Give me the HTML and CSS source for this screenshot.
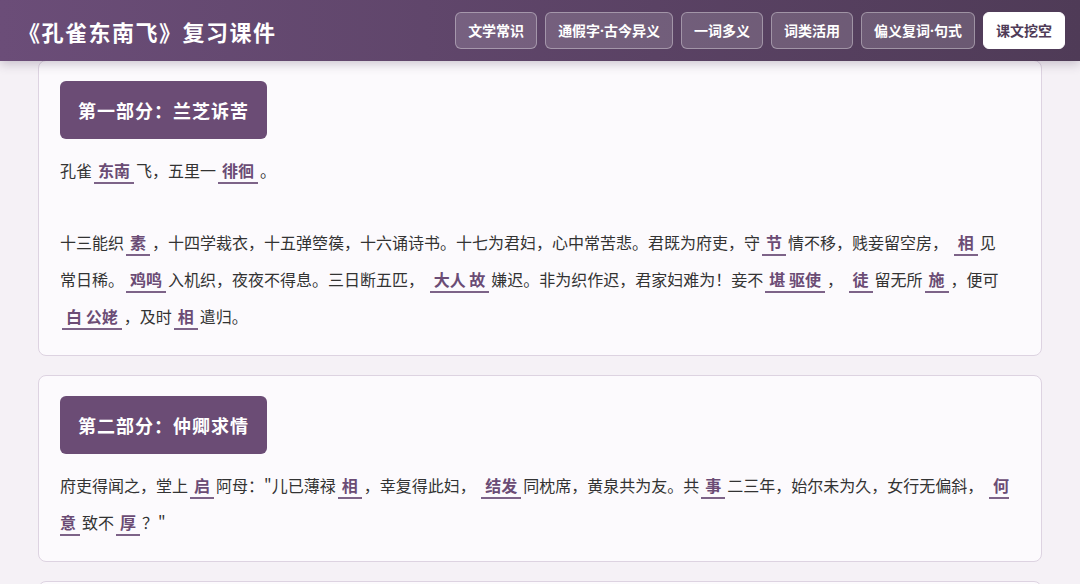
FILE: index.html
```html
<!DOCTYPE html>
<html lang="zh-CN">

<head>
    <meta charset="UTF-8">
    <meta name="viewport" content="width=device-width, initial-scale=1.0">
    <title>《孔雀东南飞》复习课件</title>
    <link rel="stylesheet" href="styles.css">
</head>

<body>
    <header class="topbar">
        <h1 class="title">《孔雀东南飞》复习课件</h1>
        <nav class="tabs">
            <button class="tab">文学常识</button>
            <button class="tab">通假字·古今异义</button>
            <button class="tab">一词多义</button>
            <button class="tab">词类活用</button>
            <button class="tab">偏义复词·句式</button>
            <button class="tab active">课文挖空</button>
        </nav>
    </header>

    <main class="content">
        <section class="part">
            <h2 class="part-title">第一部分：兰芝诉苦</h2>
            <p>孔雀<span class="key">东南</span>飞，五里一<span class="key">徘徊</span>。</p>
            <p>十三能织<span class="key">素</span>，十四学裁衣，十五弹箜篌，十六诵诗书。十七为君妇，心中常苦悲。君既为府吏，守<span class="key">节</span>情不移，贱妾留空房， <span class="key">相</span>见<br>常日稀。<span class="key">鸡鸣</span>入机织，夜夜不得息。三日断五匹， <span class="key">大人 故</span>嫌迟。非为织作迟，君家妇难为！妾不<span class="key">堪 驱使</span>， <span class="key">徒</span>留无所<span class="key">施</span>，便可<br><span class="key">白 公姥</span>，及时<span class="key">相</span>遣归。</p>
        </section>

        <section class="part">
            <h2 class="part-title">第二部分：仲卿求情</h2>
            <p>府吏得闻之，堂上<span class="key">启</span>阿母："儿已薄禄<span class="key">相</span>，幸复得此妇， <span class="key">结发</span>同枕席，黄泉共为友。共<span class="key">事</span>二三年，始尔未为久，女行无偏斜， <span class="key">何意</span>致不<span class="key">厚</span>？"</p>
        </section>

        <section class="part">
            <h2 class="part-title">第三部分：焦母逼遣</h2>
        </section>
    </main>
</body>

</html>
```

FILE: styles.css
```css
body {
    margin: 0;
    background-color: #f5f1f6;
    font-family: "Noto Sans CJK SC", "Noto Sans", sans-serif;
    color: #333;
    overflow: hidden;
}

.topbar {
    position: relative;
    z-index: 2;
    height: 61px;
    display: flex;
    align-items: center;
    justify-content: space-between;
    padding: 0 15px 0 18px;
    background: linear-gradient(90deg, #6b4d78, #4f3b57);
    box-shadow: 0 3px 10px rgba(60, 40, 70, 0.25);
}

.title {
    margin: 0;
    color: #fff;
    font-size: 22px;
    letter-spacing: 1.5px;
    font-weight: bold;
}

.tabs {
    display: flex;
    gap: 8px;
}

.tab {
    font-family: "Noto Sans", "Noto Sans CJK SC", sans-serif;
    font-size: 14px;
    font-weight: bold;
    line-height: 19px;
    color: #fff;
    background-color: rgba(255, 255, 255, 0.15);
    border: 1px solid rgba(255, 255, 255, 0.35);
    border-radius: 6px;
    padding: 8px 12px;
}

.tab.active {
    background-color: #fff;
    color: #4f3b57;
    border-color: #fff;
}

.content {
    padding: 0 38px;
    margin-top: -1px;
}

.part {
    background-color: #fcfafd;
    border: 1px solid #ddd3e1;
    border-radius: 8px;
    padding: 20px 21px 20px;
    margin-bottom: 19px;
}

.part-title {
    width: fit-content;
    margin: 0 0 13px;
    padding: 15px 18px;
    font-size: 18px;
    line-height: 28px;
    letter-spacing: 1px;
    color: #fff;
    background-color: #6b4c75;
    border-radius: 6px;
}

.part p {
    margin: 0 0 35px;
    font-size: 16px;
    line-height: 37px;
}

.part p:last-child {
    margin-bottom: 0;
}

.key {
    color: #6b4c75;
    font-weight: bold;
    padding: 0 4px;
    margin: 0 2px;
    border-bottom: 2px solid #7d6388;
}
```
